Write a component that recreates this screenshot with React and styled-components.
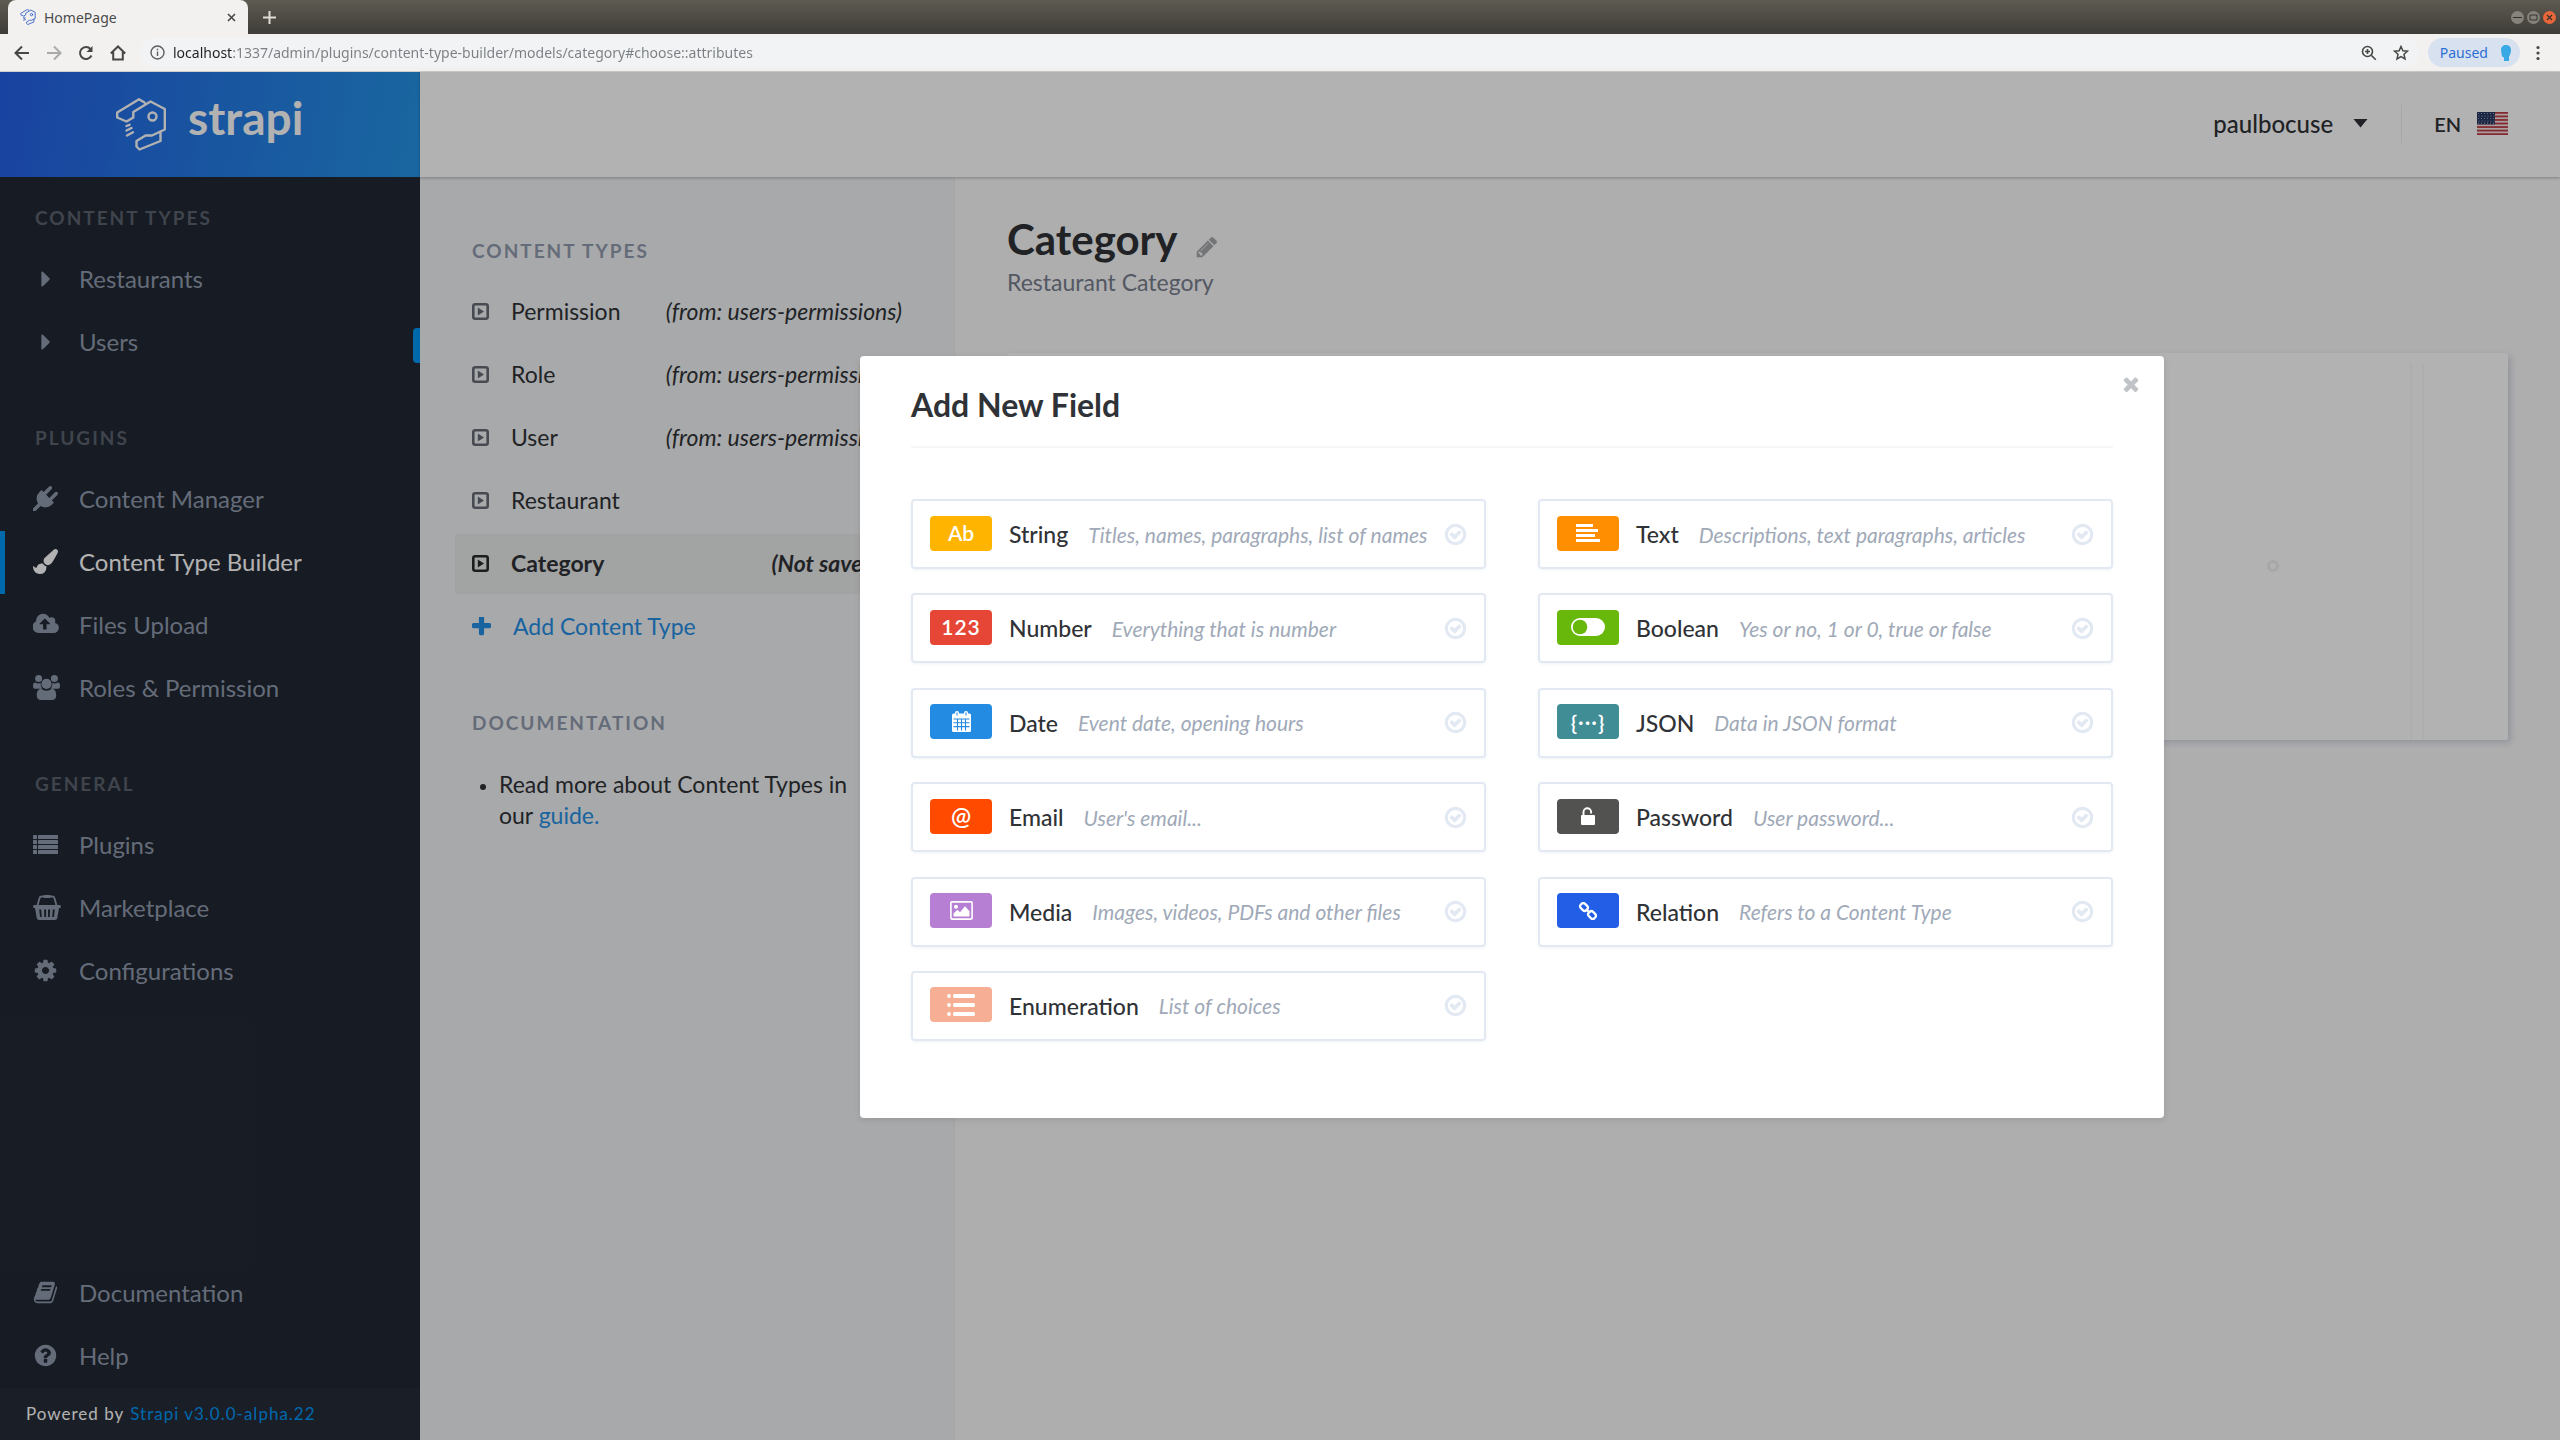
import React from "react";
import styled, { createGlobalStyle, css } from "styled-components";

const GlobalStyle = createGlobalStyle`
  *, *::before, *::after { box-sizing: border-box; }
  body { margin: 0; font-family: Lato, "Open Sans", sans-serif; color: #2f3236; background: #f9f9f9; }
  button { font: inherit; color: inherit; background: none; border: 0; padding: 0; cursor: pointer; text-align: left; }
  a { color: inherit; text-decoration: none; }
  ul { list-style: none; margin: 0; padding: 0; }
  h1, h2, h3, p { margin: 0; font-weight: inherit; }
  svg { display: block; flex: none; }
`;

/* ---------- icons ---------- */

const PATHS = {
  caretRight: "M1152 896q0 26-19 45l-448 448q-19 19-45 19t-45-19-19-45v-896q0-26 19-45t45-19 45 19l448 448q19 19 19 45z",
  plug: "M1755 453q37 38 37 90.5t-37 90.5l-401 400 150 150-160 160q-163 163-389.5 186.5t-411.5-100.5l-362 362h-181v-181l362-362q-124-185-100.5-411.5t186.5-389.5l160-160 150 150 400-401q38-37 91-37t90 37 37 90.5-37 90.5l-400 401 234 234 401-400q38-37 91-37t90 37z",
  brush: "M1615 0q70 0 122.5 46.5t52.5 116.5q0 63-45 151-332 629-465 752-97 91-218 91-126 0-216.5-92.5t-90.5-219.5q0-128 92-212l638-579q59-54 130-54zm-909 1034q39 76 106.5 130t150.5 76l1 71q4 213-129.5 347t-348.5 134q-123 0-218-46.5t-152.5-127.5-86.5-183-29-220q7 5 41 30t62 44.5 59 36.5 46 17q41 0 55-37 25-66 57.5-112.5t69.5-76 88-47.5 103-25.5 125-10.5z",
  cloud: "M1216 864q0-14-9-23l-352-352q-9-9-23-9t-23 9l-351 351q-10 12-10 24 0 14 9 23t23 9h224v352q0 13 9.5 22.5t22.5 9.5h192q13 0 22.5-9.5t9.5-22.5v-352h224q13 0 22.5-9.5t9.5-22.5zm640 288q0 159-112.5 271.5t-271.5 112.5h-1088q-185 0-316.5-131.5t-131.5-316.5q0-130 70-240t188-165q-2-30-2-43 0-212 150-362t362-150q156 0 285.5 87t188.5 231q71-62 166-62 106 0 181 75t75 181q0 76-41 138 130 31 213.5 135.5t83.5 238.5z",
  cog: "M1152 896q0-106-75-181t-181-75-181 75-75 181 75 181 181 75 181-75 75-181zm512-109v222q0 12-8 23t-20 13l-185 28q-19 54-39 91 35 50 107 138 10 12 10 25t-9 23q-27 37-99 108t-94 71q-12 0-26-9l-138-108q-44 23-91 38-16 136-29 186-7 28-36 28h-222q-14 0-24.5-8.5t-11.5-21.5l-28-184q-49-16-90-37l-141 107q-10 9-25 9-14 0-25-11-126-114-165-168-7-10-7-23 0-12 8-23 15-21 51-66.5t54-70.5q-27-50-41-99l-183-27q-13-2-21-12.5t-8-23.5v-222q0-12 8-23t19-13l186-28q14-46 39-92-40-57-107-138-10-12-10-24 0-10 9-23 26-36 98.5-107.5t94.5-71.5q13 0 26 10l138 107q44-23 91-38 16-136 29-186 7-28 36-28h222q14 0 24.5 8.5t11.5 21.5l28 184q49 16 90 37l142-107q9-9 24-9 13 0 25 10 129 119 165 170 7 8 7 22 0 12-8 23-15 21-51 66.5t-54 70.5q26 50 41 98l183 28q13 2 21 12.5t8 23.5z",
  help: "M1024 1376v-192q0-14-9-23t-23-9h-192q-14 0-23 9t-9 23v192q0 14 9 23t23 9h192q14 0 23-9t9-23zm256-672q0-88-55.5-163t-138.5-116-170-41q-243 0-371 213-15 24 8 42l132 100q7 6 19 6 16 0 25-12 53-68 86-92 34-24 86-24 48 0 85.5 26t37.5 59q0 38-20 61t-68 45q-63 28-115.5 86.5t-52.5 125.5v36q0 14 9 23t23 9h192q14 0 23-9t9-23q0-19 21.5-49.5t54.5-49.5q32-18 49-28.5t46-35 44.5-48 28-60.5 12.5-81zm384 192q0 209-103 385.5t-279.5 279.5-385.5 103-385.5-103-279.5-279.5-103-385.5 103-385.5 279.5-279.5 385.5-103 385.5 103 279.5 279.5 103 385.5z",
  book: "M1703 478q40 57 18 129l-275 906q-19 64-76.5 107.5t-122.5 43.5h-923q-77 0-148.5-53.5t-99.5-131.5q-24-67-2-127 0-4 3-27t4-37q1-8-3-21.5t-3-19.5q2-11 8-21t16.5-23.5 16.5-23.5q23-38 45-91.5t30-91.5q3-10 .5-30t-.5-28q3-11 17-28t17-23q21-36 42-92t25-90q1-9-2.5-32t.5-28q4-13 22-30.5t22-22.5q19-26 42.5-84.5t27.5-96.5q1-8-3-25.5t-2-26.5q2-8 9-18t18-23 17-21q8-12 16.5-30.5t15-35 16-36 19.5-32 26.5-23.5 36-11.5 47.5 5.5l-1 3q38-9 51-9h761q74 0 114 56t18 130l-274 906q-36 119-71.5 153.5t-128.5 34.5h-869q-27 0-38 15-11 16-1 43 24 70 144 70h923q29 0 56-15.5t35-41.5l300-987q7-22 5-57 38 15 59 43zm-1064 2q-4 13 2 22.5t20 9.5h608q13 0 25.5-9.5t16.5-22.5l21-64q4-13-2-22.5t-20-9.5h-608q-13 0-25.5 9.5t-16.5 22.5zm-83 256q-4 13 2 22.5t20 9.5h608q13 0 25.5-9.5t16.5-22.5l21-64q4-13-2-22.5t-20-9.5h-608q-13 0-25.5 9.5t-16.5 22.5z",
  plus: "M1600 736v192q0 40-28 68t-68 28h-416v416q0 40-28 68t-68 28h-192q-40 0-68-28t-28-68v-416h-416q-40 0-68-28t-28-68v-192q0-40 28-68t68-28h416v-416q0-40 28-68t68-28h192q40 0 68 28t28 68v416h416q40 0 68 28t28 68z",
  times: "M1490 1322q0 40-28 68l-136 136q-28 28-68 28t-68-28l-294-294-294 294q-28 28-68 28t-68-28l-136-136q-28-28-28-68t28-68l294-294-294-294q-28-28-28-68t28-68l136-136q28-28 68-28t68 28l294 294 294-294q28-28 68-28t68 28l136 136q28 28 28 68t-28 68l-294 294 294 294q28 28 28 68z",
  pencil: "M491 1536l91-91-235-235-91 91v107h128v128h107zm523-928q0-22-22-22-10 0-17 7l-542 542q-7 7-7 17 0 22 22 22 10 0 17-7l542-542q7-7 7-17zm-54-192l416 416-832 832h-416v-416zm683 96q0 53-37 90l-166 166-416-416 166-165q36-38 90-38 53 0 91 38l235 234q37 39 37 91z",
  check: "M1299 813l-422 422q-19 19-45 19t-45-19l-294-294q-19-19-19-45t19-45l102-102q19-19 45-19t45 19l147 147 275-275q19-19 45-19t45 19l102 102q19 19 19 45t-19 45zm141 83q0-148-73-273t-198-198-273-73-273 73-198 198-73 273 73 273 198 198 273 73 273-73 198-198 73-273zm224 0q0 209-103 385.5t-279.5 279.5-385.5 103-385.5-103-279.5-279.5-103-385.5 103-385.5 279.5-279.5 385.5-103 385.5 103 279.5 279.5 103 385.5z",
};

const Glyph = ({ name, size = 24, box = "0 0 1792 1792" }) => (
  <svg width={size} height={size} viewBox={box} fill="currentColor" aria-hidden="true">
    <path d={PATHS[name]} />
  </svg>
);

const ListGlyph = () => (
  <svg width="25" height="20" viewBox="0 0 25 20" fill="currentColor" aria-hidden="true">
    {[0, 5, 10, 15].map((y) => (
      <g key={y}>
        <rect x="0" y={y} width="4" height="4" rx="0.6" />
        <rect x="5" y={y} width="20" height="4" rx="0.6" />
      </g>
    ))}
  </svg>
);

const UsersGlyph = () => (
  <svg width="27" height="25" viewBox="0 0 27 25" fill="currentColor" aria-hidden="true">
    <circle cx="5.6" cy="3.6" r="3.5" />
    <circle cx="21.4" cy="3.6" r="3.5" />
    <circle cx="13.5" cy="8.9" r="5.1" />
    <path d="M2 7.6c2 1.3 4 1.200 5.700.5-.2 2.600.4 4.300 1.700 5.700H3c-2.200 0-3-1-3-2.600 0-2 .5-3.600 2-3.600zM25 7.600c-2 1.300-4 1.200-5.700.5.2 2.600-.4 4.300-1.700 5.700H24c2.200 0 3-1 3-2.600 0-2-.5-3.600-2-3.600z" />
    <path d="M8 13.800c3.300 2.500 7.700 2.500 11 0 3 .3 4.200 3 4.200 7 0 2.600-1.500 4.200-4.200 4.200H8c-2.700 0-4.200-1.600-4.200-4.200 0-4 1.200-6.700 4.200-7z" />
  </svg>
);

const BasketGlyph = () => (
  <svg width="28" height="25" viewBox="0 0 28 25" aria-hidden="true">
    <path d="M4.500 10.500L6.500 3.200Q7 1.500 9 1.500h10q2 0 2.500 1.700l2 7.300" fill="none" stroke="currentColor" strokeWidth="1.800" />
    <rect x="10.500" y="0" width="7" height="3" rx="1.200" fill="currentColor" />
    <path fillRule="evenodd" fill="currentColor" d="M1.500 10h25a1.500 1.500 0 0 1 0 3H26l-1.800 10.200Q23.800 25 22 25H6q-1.800 0-2.200-1.800L2 13h-.5a1.500 1.500 0 0 1 0-3zM6.200 14.500l.8 7.500h1.800l-.6-7.500zM11 14.500l.3 7.500h1.800v-7.500zM15 14.500V22h1.800l.3-7.500zM19.800 14.500l-.6 7.500H21l.8-7.500z" />
  </svg>
);

const TypeGlyph = () => (
  <svg width="17" height="17" viewBox="0 0 17 17" aria-hidden="true">
    <rect x="1.300" y="1.300" width="14.400" height="14.400" rx="2" fill="none" stroke="currentColor" strokeWidth="2.600" />
    <path d="M5.800 4.400v8.200l6.200-4.100z" fill="currentColor" />
  </svg>
);

const StrapiMark = ({ width, height, stroke = 2.4 }) => (
  <svg width={width} height={height} viewBox="0 0 50 53" fill="none" stroke="currentColor" strokeWidth={stroke} strokeLinejoin="round" strokeLinecap="round" aria-hidden="true">
    <path d="M28.500 4.500L23 1.200 1.200 14.500v5L10.500 23.500l6.800-4V14L34.500 3.500 48.800 11v20.500L36 37.500h-6.500l-9 5.500v5.500l3 3L44.500 43v-9.500" />
    <ellipse cx="36.500" cy="18.500" rx="4" ry="4" />
    <path d="M10.500 28l3-1.200M10.500 32.500l5-2.500M11 37.500l6-3.200" />
  </svg>
);

const Flag = () => (
  <svg width="31" height="23" viewBox="0 0 31 23" aria-label="English" role="img">
    <rect width="31" height="23" rx="1" fill="#f0e4e6" />
    {[0, 1, 2, 3, 4, 5, 6].map((i) => (
      <rect key={i} y={i * 3.54} width="31" height="1.770" fill="#bd3d44" />
    ))}
    <rect width="18" height="12.400" fill="#24365f" />
    {[1.5, 4, 6.5, 9, 11.2].map((y, r) =>
      [1.500, 4.500, 7.500, 10.500, 13.500, 16.500].map((x) => <circle key={`${x}-${y}`} cx={x + (r % 2 ? 0.5 : 0)} cy={y} r="0.600" fill="#a9b3c9" />)
    )}
  </svg>
);

/* ---------- browser chrome ---------- */

const Shell = styled.div`
  min-height: 100vh;
  display: flex;
  flex-direction: column;
`;
const Chrome = styled.header`
  font-family: "Noto Sans", "Open Sans", sans-serif;
  border-bottom: 1px solid #cfcfcd;
`;
const TabStrip = styled.div`
  height: 34px;
  display: flex;
  align-items: center;
  padding: 0 4px 0 8px;
  background: linear-gradient(#5d5a51, #3f3d38);
`;
const Tab = styled.div`
  width: 240px;
  height: 34px;
  display: flex;
  align-items: center;
  gap: 8px;
  padding: 0 12px;
  border-radius: 8px 8px 0 0;
  background: #f2f1f0;
  color: #4b4b4b;
  font-size: 14px;
`;
const TabTitle = styled.span`flex: 1;`;
const TabMark = styled.span`color: #3763c4;`;
const ChromeButton = styled.button`
  display: grid;
  place-items: center;
  color: ${(p) => (p.$muted ? "#a9a9a8" : "#474746")};
`;
const NewTab = styled(ChromeButton)`
  margin-left: 15px;
  color: #dedcd6;
`;
const WindowButtons = styled.div`
  margin-left: auto;
  display: flex;
  gap: 3px;
`;
const WindowButton = styled.button`
  width: 13px;
  height: 13px;
  border-radius: 50%;
  display: grid;
  place-items: center;
  color: #33322e;
  background: ${(p) => (p.$close ? "#e9653a" : "#85837b")};
`;
const Toolbar = styled.div`
  height: 37px;
  display: flex;
  align-items: center;
  padding: 0 16px 0 14px;
  background: #f2f1f0;
`;
const NavButtons = styled.div`
  display: flex;
  gap: 16px;
`;
const AddressBar = styled.div`
  flex: 1;
  height: 29px;
  margin: 0 9px 0 14px;
  padding: 0 10px;
  display: flex;
  align-items: center;
  gap: 8px;
  border-radius: 15px;
  background: #f1f3f4;
  color: #5b5e62;
`;
const AddressInput = styled.input`
  flex: 1;
  min-width: 0;
  border: 0;
  padding: 0;
  outline: 0;
  font: 14px "Noto Sans", "Open Sans", sans-serif;
  color: transparent;
  background: linear-gradient(90deg, #202124 60px, #7b7f83 60px);
  background-clip: text;
  -webkit-background-clip: text;
`;
const BarActions = styled.div`
  display: flex;
  gap: 16px;
`;
const PausedPill = styled.button`
  height: 29px;
  display: flex;
  align-items: center;
  gap: 13px;
  margin-right: 12px;
  padding: 0 9px 0 12px;
  border-radius: 15px;
  background: #d8e1ef;
  color: #2b6fd6;
  font-size: 14px;
`;

function BrowserChrome() {
  const line = { fill: "none", stroke: "currentColor", strokeWidth: 2 };
  return (
    <Chrome>
      <TabStrip>
        <Tab>
          <TabMark><StrapiMark width={16} height={16} stroke={3} /></TabMark>
          <TabTitle>HomePage</TabTitle>
          <ChromeButton aria-label="Close tab">
            <svg width="9" height="9" viewBox="0 0 9 9" {...line} strokeWidth="1.600"><path d="M1 1l7 7M8 1l-7 7" /></svg>
          </ChromeButton>
        </Tab>
        <NewTab aria-label="New tab">
          <svg width="13" height="13" viewBox="0 0 13 13" {...line}><path d="M6.500 0v13M0 6.500h13" /></svg>
        </NewTab>
        <WindowButtons>
          <WindowButton aria-label="Minimize"><svg width="9" height="9" viewBox="0 0 9 9" {...line} strokeWidth="1"><path d="M0 4.500h9" /></svg></WindowButton>
          <WindowButton aria-label="Maximize"><svg width="9" height="9" viewBox="0 0 9 9" {...line} strokeWidth="1"><path d="M1 2h7v5H1z" /></svg></WindowButton>
          <WindowButton $close aria-label="Close"><svg width="7" height="7" viewBox="0 0 7 7" {...line} strokeWidth="1.200"><path d="M1 1l5 5M6 1L1 6" /></svg></WindowButton>
        </WindowButtons>
      </TabStrip>
      <Toolbar>
        <NavButtons>
          <ChromeButton aria-label="Back"><svg width="16" height="16" viewBox="0 0 16 16" {...line}><path d="M15 8H2M8 1.500L1.500 8 8 14.500" /></svg></ChromeButton>
          <ChromeButton $muted aria-label="Forward"><svg width="16" height="16" viewBox="0 0 16 16" {...line}><path d="M1 8h13M8 1.500L14.500 8 8 14.500" /></svg></ChromeButton>
          <ChromeButton aria-label="Reload"><svg width="16" height="16" viewBox="0 0 16 16" {...line}><path d="M13.500 10.500A6 6 0 1 1 12.500 4" /><path d="M14.500 1v6h-6z" fill="currentColor" stroke="none" /></svg></ChromeButton>
          <ChromeButton aria-label="Home"><svg width="16" height="16" viewBox="0 0 16 16" {...line}><path d="M0.800 8.500L8 1.500l7.200 7M3.200 7v7.500h9.600V7" /></svg></ChromeButton>
        </NavButtons>
        <AddressBar>
          <svg width="15" height="15" viewBox="0 0 15 15" {...line} strokeWidth="1.400"><circle cx="7.500" cy="7.500" r="6.500" /><path d="M7.500 6.500v4.500M7.500 3.800v1.500" /></svg>
          <AddressInput aria-label="Address" readOnly value="localhost:1337/admin/plugins/content-type-builder/models/category#choose::attributes" />
          <BarActions>
            <ChromeButton aria-label="Zoom"><svg width="16" height="16" viewBox="0 0 16 16" {...line} strokeWidth="1.600"><circle cx="6.500" cy="6.500" r="5" /><path d="M10.200 10.200l4.600 4.600M4 6.500h5M6.500 4v5" /></svg></ChromeButton>
            <ChromeButton aria-label="Bookmark"><svg width="16" height="16" viewBox="0 0 16 16" {...line} strokeWidth="1.500"><path d="M8 1.500l1.900 4.300 4.600.4-3.500 3.100 1 4.600L8 11.500l-4 2.400 1-4.600L1.500 6.200l4.600-.4z" /></svg></ChromeButton>
          </BarActions>
        </AddressBar>
        <PausedPill>
          Paused
          <svg width="10" height="16" viewBox="0 0 10 16" fill="#39a9e6"><path d="M5 0c3 0 5 1.800 5 5 0 3-1 5-2 6.500V16H3v-3.500C1 12 .5 11 .6 9L0 5c0-3 2-5 5-5z" /></svg>
        </PausedPill>
        <ChromeButton aria-label="Menu"><svg width="12" height="16" viewBox="0 0 12 16" fill="currentColor"><circle cx="6" cy="2.500" r="1.600" /><circle cx="6" cy="8" r="1.600" /><circle cx="6" cy="13.500" r="1.600" /></svg></ChromeButton>
      </Toolbar>
    </Chrome>
  );
}

/* ---------- admin layout ---------- */

const Page = styled.div`
  position: relative;
  flex: 1;
  display: flex;
`;

const Sidebar = styled.aside`
  position: relative;
  width: 420px;
  flex: none;
  display: flex;
  flex-direction: column;
  background: #222833;
  color: #919bae;
`;
const Brand = styled.a`
  height: 105px;
  display: flex;
  align-items: center;
  gap: 22px;
  padding: 0 116px;
  background: linear-gradient(100deg, #2460e6, #2494e6);
  color: #fff;
`;
const BrandName = styled.span`
  font-size: 46px;
  line-height: 56px;
  font-weight: 700;
  padding-bottom: 14px;
`;
const NavSection = styled.nav`
  padding-top: ${(p) => (p.$first ? "29px" : "52px")};
`;
const sectionTitle = css`
  font-size: 19px;
  line-height: 24px;
  font-weight: 700;
  letter-spacing: 2px;
  text-transform: uppercase;
`;
const NavTitle = styled.h3`
  ${sectionTitle}
  padding: 0 35px;
  margin-bottom: 18px;
  color: #5b626f;
`;
const NavLink = styled.a`
  height: 63px;
  display: flex;
  align-items: center;
  padding: 0 0 2px 28px;
  border-left: 5px solid ${(p) => (p.$active ? "#0097f7" : "transparent")};
  color: ${(p) => (p.$active ? "#fff" : "inherit")};
  font-size: 24px;
`;
const NavIcon = styled.span`
  width: 46px;
  display: flex;
`;
const BottomNav = styled.nav`
  margin-top: auto;
`;
const Powered = styled.footer`
  height: 52px;
  padding: 0 26px 2px;
  display: flex;
  align-items: center;
  gap: 6px;
  background: #262c37;
  color: #fff;
  font-size: 17px;
  letter-spacing: 1px;
`;
const PoweredLink = styled.a`color: #0097f7;`;
const DrawerHandle = styled.span`
  position: absolute;
  top: 256px;
  right: 0;
  width: 7px;
  height: 35px;
  border-radius: 4px 0 0 4px;
  background: #0097f7;
`;

const Content = styled.div`
  flex: 1;
  min-width: 0;
  display: flex;
  flex-direction: column;
`;
const TopBar = styled.header`
  position: relative;
  height: 105px;
  display: flex;
  align-items: center;
  justify-content: flex-end;
  padding: 0 52px 2px 0;
  background: #fff;
  box-shadow: 0 1px 3px rgba(40, 42, 49, 0.3);
`;
const UserMenu = styled.button`
  display: flex;
  align-items: center;
  gap: 20px;
  height: 38px;
  padding-right: 33px;
  border-right: 1px solid #f0f0f0;
  font-size: 24px;
  font-weight: 500;
`;
const LocaleMenu = styled.button`
  display: flex;
  align-items: center;
  gap: 16px;
  padding-left: 32px;
  font-size: 20px;
  font-weight: 600;
`;
const Columns = styled.div`
  flex: 1;
  display: flex;
`;
const PluginNav = styled.aside`
  width: 535px;
  flex: none;
  padding: 62px 35px;
  background: #f1f2f4;
  border-right: 1px solid #eceded;
`;
const PluginTitle = styled.h3`
  ${sectionTitle}
  padding-left: 17px;
  margin-bottom: 19px;
  color: #919bae;
`;
const TypeLink = styled.a`
  height: 60px;
  margin-bottom: 3px;
  display: flex;
  align-items: center;
  gap: 22px;
  padding: 0 17px 2px;
  border-radius: 3px;
  font-size: 23px;
  ${(p) => p.$active && css`background: #e9eaea; font-weight: 700;`}
`;
const TypeIcon = styled.span`
  color: ${(p) => (p.$active ? "#292b2c" : "#666b74")};
`;
const TypeOrigin = styled.em`
  margin-left: auto;
  padding-right: ${(p) => (p.$active ? "21px" : "0")};
`;
const AddType = styled.button`
  height: 60px;
  display: flex;
  align-items: center;
  gap: 22px;
  padding: 0 17px 2px;
  color: #258fe5;
  font-size: 23px;
`;
const DocTitle = styled(PluginTitle)`margin-top: 54px;`;
const DocList = styled.ul`
  padding: 15px 68px 0 44px;
  font-size: 23px;
  line-height: 31px;
`;
const DocItem = styled.li`
  list-style: disc;
  &::marker { font-size: 19px; }
`;
const InlineLink = styled.a`color: #258fe5;`;

const Main = styled.main`
  flex: 1;
  min-width: 0;
  padding: 36px 52px 37px 52px;
`;
const TitleRow = styled.div`
  display: flex;
  align-items: center;
  gap: 18px;
`;
const Title = styled.h1`
  font-size: 42px;
  line-height: 52px;
  font-weight: 700;
`;
const EditButton = styled.button`
  padding-top: 16px;
  color: #a7a8ac;
`;
const Subtitle = styled.p`
  font-size: 23px;
  line-height: 34px;
  color: #787e8f;
`;
const EmptyPanel = styled.section`
  height: 387px;
  margin-top: 54px;
  display: flex;
  justify-content: flex-end;
  padding-right: 84px;
  background: #fff;
  border-radius: 2px;
  box-shadow: 3px 3px 6px #d5d8e2;
`;

/* ---------- modal ---------- */

const Backdrop = styled.div`
  position: absolute;
  inset: 0;
  display: flex;
  justify-content: center;
  align-items: flex-start;
  padding: 284px 0 0 464px;
  background: rgba(0, 0, 0, 0.3);
`;
const Dialog = styled.section`
  position: relative;
  width: 1304px;
  padding: 23px 51px 77px;
  border-radius: 4px;
  background: #fff;
  box-shadow: 0 2px 6px rgba(0, 0, 0, 0.1);
`;
const CloseButton = styled.button`
  position: absolute;
  top: 17px;
  right: 22px;
  color: #c0c3c7;
`;
const DialogTitle = styled.h2`
  padding-bottom: 15px;
  margin-bottom: 51px;
  border-bottom: 2px solid #f6f6f6;
  font-size: 32px;
  line-height: 52px;
  font-weight: 700;
`;
const FieldGrid = styled.div`
  min-height: 542px;
  display: grid;
  grid-template-columns: 1fr 1fr;
  column-gap: 52px;
  align-content: space-between;
`;
const FieldCard = styled.button`
  height: 70px;
  display: flex;
  align-items: center;
  padding: 0 17px;
  border: 2px solid #e3e9f3;
  border-radius: 4px;
  box-shadow: 0 1px 3px rgba(227, 233, 243, 0.6);
`;
const Badge = styled.span`
  width: 62px;
  height: 35px;
  flex: none;
  display: grid;
  place-items: center;
  margin: 0 17px 2px 0;
  border-radius: 4px;
  background: ${(p) => p.$color};
  color: #fff;
  font-size: ${(p) => (p.$large ? "24px" : "21px")};
  font-weight: 600;
  line-height: 24px;
  letter-spacing: ${(p) => (p.$wide ? "1px" : "0")};
`;
const FieldName = styled.span`
  font-size: 23px;
  font-weight: 500;
  margin-right: 20px;
`;
const FieldHint = styled.em`
  flex: 1;
  font-size: 21px;
  white-space: nowrap;
  color: #a0a9b8;
`;
const Tick = styled.span`
  margin-right: -1px;
  color: #e3e9f3;
`;

const TextGlyph = () => (
  <svg width="24" height="18" viewBox="0 0 24 18" fill="currentColor"><rect width="17" height="3" /><rect y="5" width="22" height="3" /><rect y="10" width="19" height="3" /><rect y="15" width="24" height="3" /></svg>
);
const ToggleGlyph = () => (
  <svg width="34" height="18" viewBox="0 0 34 18"><rect width="34" height="18" rx="9" fill="currentColor" /><circle cx="9" cy="9" r="7.300" fill="#68b80c" /></svg>
);
const CalendarGlyph = () => (
  <svg width="19" height="21" viewBox="0 0 19 21">
    <rect y="2.500" width="19" height="18.500" rx="1.500" fill="currentColor" />
    <rect x="3" y="0" width="4" height="6" rx="1.800" fill="currentColor" /><rect x="12" y="0" width="4" height="6" rx="1.800" fill="currentColor" />
    <path d="M5 1.500v3M14 1.500v3M1.500 8h16M1.500 11.800h16M1.500 15.600h16M5.500 8v11.500M9.500 8v11.500M13.500 8v11.500" stroke="#238ce2" strokeWidth="1.100" />
  </svg>
);
const ImageGlyph = () => (
  <svg width="23" height="19" viewBox="0 0 23 19"><rect x="0.900" y="0.900" width="21.200" height="17.200" rx="1" fill="none" stroke="currentColor" strokeWidth="1.600" /><circle cx="6" cy="5.800" r="2" fill="currentColor" /><path d="M3.500 15.500v-3l4-3.800 2.500 2.500 5-6 4.500 5v5.300z" fill="currentColor" /></svg>
);
const EnumGlyph = () => (
  <svg width="28" height="22" viewBox="0 0 28 22" fill="currentColor">
    {[0, 9, 18].map((y) => <g key={y}><circle cx="2" cy={y + 2} r="1.900" /><rect x="6" y={y} width="22" height="4" rx="1.500" /></g>)}
  </svg>
);
const LockGlyph = () => (
  <svg width="14" height="18" viewBox="0 0 14 18"><rect y="8" width="14" height="10" rx="1" fill="currentColor" /><path d="M2.500 9V5a3.800 3.800 0 0 1 7.600 0v1.500" fill="none" stroke="currentColor" strokeWidth="1.900" /></svg>
);
const LinkGlyph = () => (
  <svg width="18" height="18" viewBox="0 0 18 18" fill="none" stroke="currentColor" strokeWidth="2.200">
    <rect x="-4" y="-3" width="8" height="6" rx="2.600" transform="translate(5 5) rotate(45)" /><rect x="-4" y="-3" width="8" height="6" rx="2.600" transform="translate(13 13) rotate(45)" /><path d="M7 7l4 4" />
  </svg>
);

const FIELDS = [
  { name: "String", hint: "Titles, names, paragraphs, list of names", color: "#ffb500", badge: "Ab" },
  { name: "Text", hint: "Descriptions, text paragraphs, articles", color: "#ff8f00", badge: <TextGlyph /> },
  { name: "Number", hint: "Everything that is number", color: "#e64635", badge: "123", wide: true },
  { name: "Boolean", hint: "Yes or no, 1 or 0, true or false", color: "#68b80c", badge: <ToggleGlyph /> },
  { name: "Date", hint: "Event date, opening hours", color: "#238ce2", badge: <CalendarGlyph /> },
  { name: "JSON", hint: "Data in JSON format", color: "#418d95", badge: "{···}", wide: true },
  { name: "Email", hint: "User's email...", color: "#ff4a00", badge: "@", large: true },
  { name: "Password", hint: "User password...", color: "#525250", badge: <LockGlyph /> },
  { name: "Media", hint: "Images, videos, PDFs and other files", color: "#b67fd3", badge: <ImageGlyph /> },
  { name: "Relation", hint: "Refers to a Content Type", color: "#235ee6", badge: <LinkGlyph /> },
  { name: "Enumeration", hint: "List of choices", color: "#f6af95", badge: <EnumGlyph /> },
];

const SECTIONS = [
  { title: "Content Types", links: [
    { label: "Restaurants", icon: <Glyph name="caretRight" size={26} /> },
    { label: "Users", icon: <Glyph name="caretRight" size={26} /> },
  ] },
  { title: "Plugins", links: [
    { label: "Content Manager", icon: <Glyph name="plug" size={25} /> },
    { label: "Content Type Builder", icon: <Glyph name="brush" size={25} />, active: true },
    { label: "Files Upload", icon: <Glyph name="cloud" size={26} box="-32 0 1900 1900" /> },
    { label: "Roles & Permission", icon: <UsersGlyph /> },
  ] },
  { title: "General", links: [
    { label: "Plugins", icon: <ListGlyph /> },
    { label: "Marketplace", icon: <BasketGlyph /> },
    { label: "Configurations", icon: <Glyph name="cog" size={25} /> },
  ] },
];
const BOTTOM_LINKS = [
  { label: "Documentation", icon: <Glyph name="book" size={25} /> },
  { label: "Help", icon: <Glyph name="help" size={25} /> },
];
const TYPES = [
  { label: "Permission", origin: "(from: users-permissions)" },
  { label: "Role", origin: "(from: users-permissions)" },
  { label: "User", origin: "(from: users-permissions)" },
  { label: "Restaurant" },
  { label: "Category", origin: "(Not saved)", active: true },
];

const renderLink = ({ label, icon, active }) => (
  <NavLink key={label} href="#" $active={active}>
    <NavIcon>{icon}</NavIcon>
    {label}
  </NavLink>
);

export default function App() {
  return (
    <Shell>
      <GlobalStyle />
      <BrowserChrome />
      <Page>
        <Sidebar>
          <Brand href="#">
            <StrapiMark width={50} height={53} />
            <BrandName>strapi</BrandName>
          </Brand>
          {SECTIONS.map((section, i) => (
            <NavSection key={section.title} $first={i === 0}>
              <NavTitle>{section.title}</NavTitle>
              {section.links.map(renderLink)}
            </NavSection>
          ))}
          <BottomNav>{BOTTOM_LINKS.map(renderLink)}</BottomNav>
          <Powered>
            <span>Powered by</span>
            <PoweredLink href="#">Strapi v3.0.0-alpha.22</PoweredLink>
          </Powered>
          <DrawerHandle />
        </Sidebar>
        <Content>
          <TopBar>
            <UserMenu>
              paulbocuse
              <svg width="15" height="9" viewBox="0 0 15 9" fill="currentColor"><path d="M.5 0h14L7.500 8.500z" /></svg>
            </UserMenu>
            <LocaleMenu>EN<Flag /></LocaleMenu>
          </TopBar>
          <Columns>
            <PluginNav>
              <PluginTitle>Content Types</PluginTitle>
              {TYPES.map(({ label, origin, active }) => (
                <TypeLink key={label} href="#" $active={active}>
                  <TypeIcon $active={active}><TypeGlyph /></TypeIcon>
                  {label}
                  {origin && <TypeOrigin $active={active}>{origin}</TypeOrigin>}
                </TypeLink>
              ))}
              <AddType><Glyph name="plus" size={19} box="192 192 1408 1408" />Add Content Type</AddType>
              <DocTitle>Documentation</DocTitle>
              <DocList>
                <DocItem>Read more about Content Types in our <InlineLink href="#">guide.</InlineLink></DocItem>
              </DocList>
            </PluginNav>
            <Main>
              <TitleRow>
                <Title>Category</Title>
                <EditButton aria-label="Edit"><Glyph name="pencil" size={24} /></EditButton>
              </TitleRow>
              <Subtitle>Restaurant Category</Subtitle>
              <EmptyPanel>
                <svg width="158" height="387" viewBox="0 0 158 387" fill="none" stroke="#fafafa" aria-hidden="true">
                  <path d="M145 10v377M157 10v377" strokeWidth="2" />
                  <circle cx="7" cy="213" r="4.500" stroke="#f0f0f0" strokeWidth="3" />
                </svg>
              </EmptyPanel>
            </Main>
          </Columns>
        </Content>
        <Backdrop>
          <Dialog role="dialog" aria-modal="true" aria-labelledby="dialog-title">
            <CloseButton aria-label="Close"><Glyph name="times" size={22} /></CloseButton>
            <DialogTitle id="dialog-title">Add New Field</DialogTitle>
            <FieldGrid>
              {FIELDS.map(({ name, hint, color, badge, wide, large }) => (
                <FieldCard key={name}>
                  <Badge $color={color} $wide={wide} $large={large}>{badge}</Badge>
                  <FieldName>{name}</FieldName>
                  <FieldHint>{hint}</FieldHint>
                  <Tick><Glyph name="check" size={25} /></Tick>
                </FieldCard>
              ))}
            </FieldGrid>
          </Dialog>
        </Backdrop>
      </Page>
    </Shell>
  );
}
